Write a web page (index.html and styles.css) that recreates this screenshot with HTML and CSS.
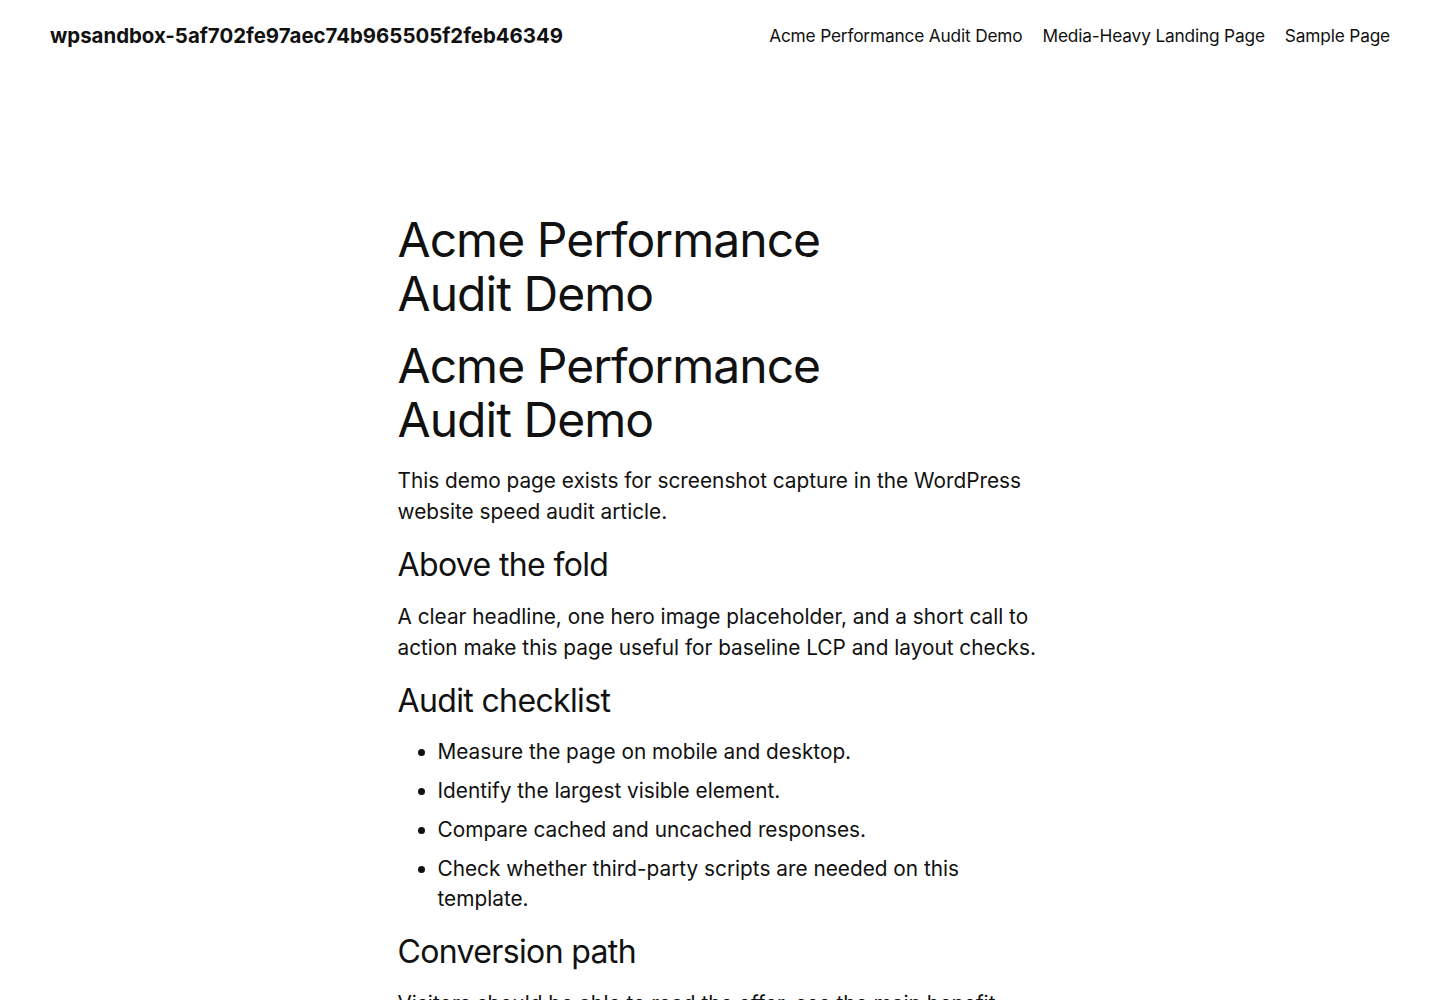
FILE: index.html
```html
<!DOCTYPE html>
<html lang="en">
<head>
<meta charset="utf-8">
<title>Acme Performance Audit Demo</title>
<link rel="stylesheet" href="styles.css">
</head>
<body>
<header class="site-header">
  <a class="site-title" href="#">wpsandbox-5af702fe97aec74b965505f2feb46349</a>
  <nav class="site-nav">
    <a href="#">Acme Performance Audit Demo</a>
    <a href="#">Media-Heavy Landing Page</a>
    <a href="#">Sample Page</a>
  </nav>
</header>
<main class="content">
  <h1 class="title">Acme Performance Audit Demo</h1>
  <h1 class="title">Acme Performance Audit Demo</h1>
  <p>This demo page exists for screenshot capture in the WordPress website speed audit article.</p>
  <h3>Above the fold</h3>
  <p>A clear headline, one hero image placeholder, and a short call to action make this page useful for baseline LCP and layout checks.</p>
  <h3>Audit checklist</h3>
  <ul class="checklist">
    <li>Measure the page on mobile and desktop.</li>
    <li>Identify the largest visible element.</li>
    <li>Compare cached and uncached responses.</li>
    <li>Check whether third-party scripts are needed on this template.</li>
  </ul>
  <h3>Conversion path</h3>
  <p>Visitors should be able to read the offer, see the main benefit, and find the next step without waiting.</p>
</main>
</body>
</html>
```

FILE: styles.css
```css
* { box-sizing: border-box; }
html, body { margin: 0; padding: 0; background: #ffffff; }
body {
  font-family: Inter, "Noto Sans", "Liberation Sans", sans-serif;
  color: #111111;
}
a { color: #111111; text-decoration: none; }

.site-header {
  display: flex;
  justify-content: space-between;
  align-items: center;
  height: 70px;
  padding: 0 50px;
}
.site-title {
  font-size: 20.4px;
  font-weight: 700;
}
.site-nav {
  display: flex;
  gap: 20px;
  font-size: 17.3px;
  font-weight: 400;
  letter-spacing: -0.01em;
}

.content {
  width: 645px;
  margin: 143px auto 0;
  display: flex;
  flex-direction: column;
  gap: 18px;
}
.content h1,
.content h3,
.content p,
.content ul { margin: 0; }

.title {
  font-size: 48px;
  line-height: 54px;
  font-weight: 400;
  letter-spacing: -0.02em;
  text-wrap: balance;
}
.content h3 {
  font-size: 32px;
  line-height: 36px;
  font-weight: 400;
  letter-spacing: -0.02em;
  margin-top: 2px;
  text-wrap: balance;
}
.content p {
  font-size: 20.8px;
  line-height: 31px;
}
.checklist {
  padding-left: 40px;
  font-size: 20.8px;
  line-height: 30px;
  display: flex;
  flex-direction: column;
  gap: 9px;
}
```
